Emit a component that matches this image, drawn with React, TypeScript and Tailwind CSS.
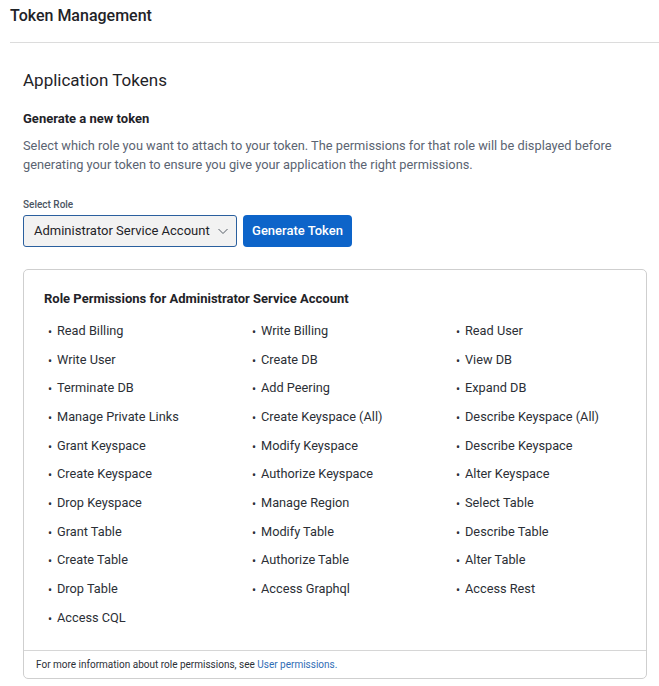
const permissions = [
  'Read Billing', 'Write Billing', 'Read User',
  'Write User', 'Create DB', 'View DB',
  'Terminate DB', 'Add Peering', 'Expand DB',
  'Manage Private Links', 'Create Keyspace (All)', 'Describe Keyspace (All)',
  'Grant Keyspace', 'Modify Keyspace', 'Describe Keyspace',
  'Create Keyspace', 'Authorize Keyspace', 'Alter Keyspace',
  'Drop Keyspace', 'Manage Region', 'Select Table',
  'Grant Table', 'Modify Table', 'Describe Table',
  'Create Table', 'Authorize Table', 'Alter Table',
  'Drop Table', 'Access Graphql', 'Access Rest',
  'Access CQL',
]

function ChevronDown() {
  return (
    <svg width="12" height="12" viewBox="0 0 12 12" fill="none" aria-hidden="true">
      <path d="M1.5 4l4.5 4.5L10.5 4" stroke="#555c66" strokeWidth="1" />
    </svg>
  )
}

export default function App() {
  return (
    <div className="h-[686px] w-[659px] overflow-hidden bg-white font-['Roboto',sans-serif] text-[#1f2328]">
      <header className="ml-[10px] border-b border-[#dcdcdc] pb-[16px] pt-[6px]">
        <h1 className="text-[16px] font-medium leading-[20px] text-[#1f2328]">Token Management</h1>
      </header>

      <main className="pl-[23px] pr-[12px]">
        <h2 className="mt-[25px] text-[17px] leading-[24px] text-[#1f2328]">Application Tokens</h2>
        <h3 className="mt-[18px] text-[13px] font-bold leading-[18px]">Generate a new token</h3>
        <p className="mt-[8px] text-[12.8px] leading-[19px] text-[#5b6472]">
          Select which role you want to attach to your token. The permissions for that role will be displayed before
          generating your token to ensure you give your application the right permissions.
        </p>

        <label className="mt-[24px] block text-[10px] font-medium leading-[14px] text-[#4b5563]">Select Role</label>
        <div className="mt-[3px] flex gap-[6px]">
          <button
            type="button"
            className="flex h-[32px] w-[214px] items-center justify-between rounded-[3px] border border-[#2a5f9e] bg-[#f2f2f2] pl-[10px] pr-[7px] text-[13px] text-[#1f2328]"
          >
            <span>Administrator Service Account</span>
            <ChevronDown />
          </button>
          <button
            type="button"
            className="h-[32px] w-[109px] rounded-[4px] bg-[#0d64c9] text-[13px] font-medium text-white"
          >
            Generate Token
          </button>
        </div>

        <section className="mt-[22px] w-[624px] rounded-[5px] border border-[#cfcfcf]">
          <div className="px-[20px] pb-[18px] pt-[20px]">
            <h4 className="text-[13px] font-bold leading-[18px]">Role Permissions for Administrator Service Account</h4>
            <ul className="mt-[8.5px] grid grid-cols-[204px_204px_1fr] pl-[4px]">
              {permissions.map((p) => (
                <li key={p} className="flex h-[28.7px] items-center text-[12.75px] leading-[16px] text-[#2b2f36]">
                  <span className="w-[9px] pt-[2px] text-[12px]">•</span>
                  <span>{p}</span>
                </li>
              ))}
            </ul>
          </div>
          <footer className="border-t border-[#d6d6d6] px-[12px] py-[7px] text-[10px] leading-[13px] text-[#2b2f36]">
            For more information about role permissions, see{' '}
            <a href="#" className="text-[#2f6db5]">User permissions.</a>
          </footer>
        </section>
      </main>
    </div>
  )
}
